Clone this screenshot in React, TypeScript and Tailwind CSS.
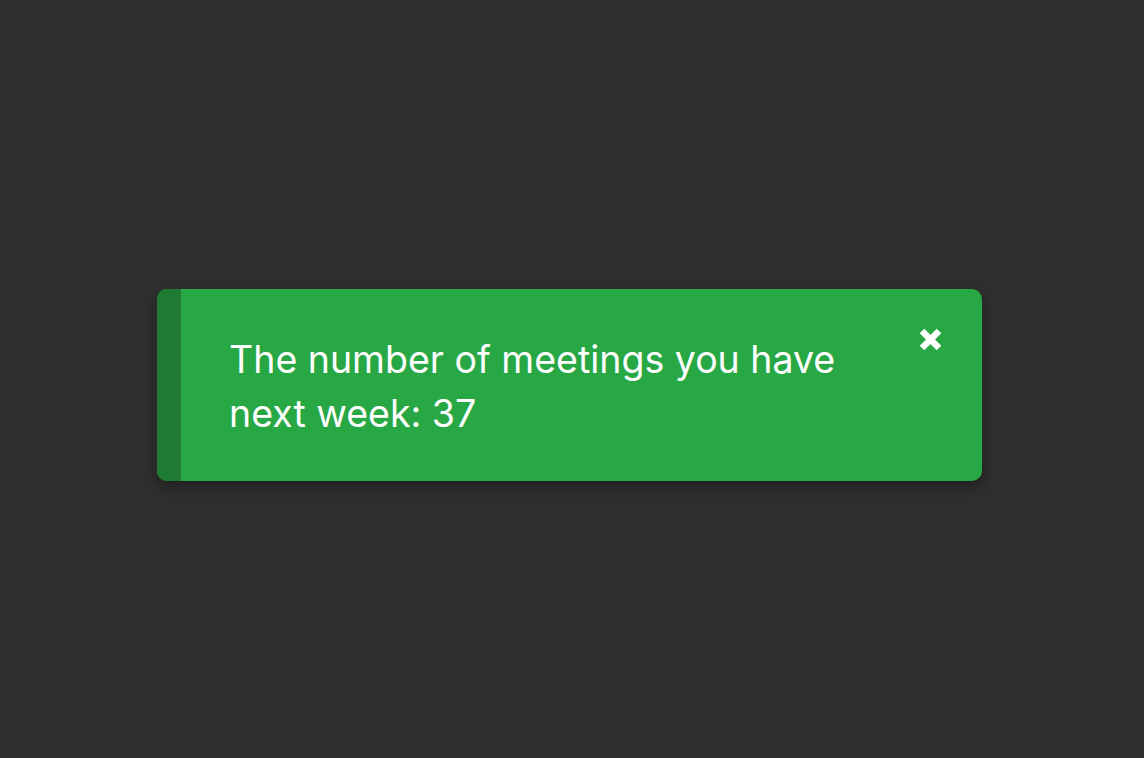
import React from 'react';

const CloseIcon: React.FC = () => (
  <svg width="23" height="23" viewBox="0 0 23 23" aria-hidden="true">
    <path d="M3 3 L20 20 M20 3 L3 20" stroke="white" strokeWidth="6.5" strokeLinecap="butt" />
  </svg>
);

const App: React.FC = () => {
  return (
    <div className="min-h-screen bg-[#2f2f2f] pt-[289px] pl-[157px]" style={{ fontFamily: 'Inter, "Noto Sans", sans-serif' }}>
      {/* Toast */}
      <div className="relative flex w-[825px] rounded-[10px] overflow-hidden bg-[#28a745] shadow-[0_6px_14px_rgba(0,0,0,0.35)]">
        <div className="w-[24px] bg-[#1f7a32]" />
        <div className="flex-1 pl-[48px] pr-[120px] pt-[44px] pb-[40px]">
          <p className="text-[37.5px] leading-[54px] text-white font-normal">
            The number of meetings you have next week: 37
          </p>
        </div>
        <button className="absolute top-[39px] right-[40px] flex items-center justify-center" aria-label="Close">
          <CloseIcon />
        </button>
      </div>
    </div>
  );
};

export default App;
